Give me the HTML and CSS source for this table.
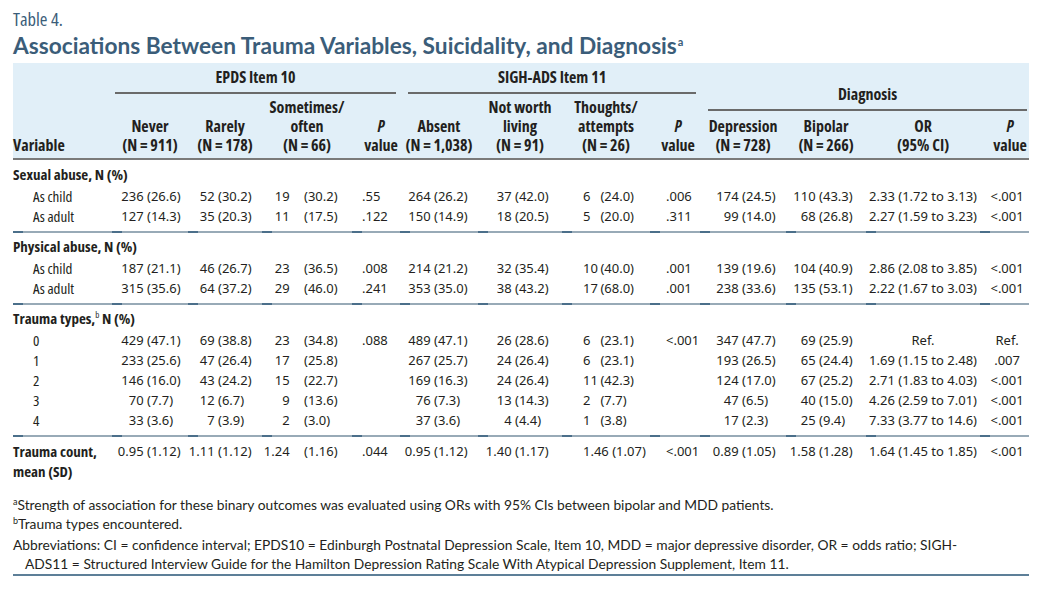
FILE: index.html
```html
<!DOCTYPE html>
<html lang="en">
<head>
<meta charset="utf-8">
<title>Table 4</title>
<link rel="stylesheet" href="styles.css">
</head>
<body>
<div class="page">
  <div class="tlabel">Table 4.</div>
  <h1 class="title">Associations Between Trauma Variables, Suicidality, and Diagnosis<sup>a</sup></h1>
  <table class="data">
    <colgroup>
      <col class="w-var"><col class="w-never"><col class="w-rarely"><col class="w-some"><col class="w-p1">
      <col class="w-absent"><col class="w-notw"><col class="w-thou"><col class="w-p2">
      <col class="w-dep"><col class="w-bip"><col class="w-or"><col class="w-p3">
    </colgroup>
    <thead>
      <tr class="hr1">
        <th rowspan="3" class="var">Variable</th>
        <th colspan="4" class="grp g1"><div class="rule">EPDS Item 10</div></th>
        <th colspan="4" class="grp g2"><div class="rule">SIGH-ADS Item 11</div></th>
        <th colspan="4" rowspan="2" class="grp g3"><div class="rule">Diagnosis</div></th>
      </tr>
      <tr class="hr2">
        <th rowspan="2">Never<br>(N&#8201;=&#8201;911)</th>
        <th rowspan="2">Rarely<br>(N&#8201;=&#8201;178)</th>
        <th rowspan="2">Sometimes/<br>often<br>(N&#8201;=&#8201;66)</th>
        <th rowspan="2" class="pv pv1"><i>P</i><br>value</th>
        <th rowspan="2">Absent<br>(N&#8201;=&#8201;1,038)</th>
        <th rowspan="2">Not worth<br>living<br>(N&#8201;=&#8201;91)</th>
        <th rowspan="2">Thoughts/<br>attempts<br>(N&#8201;=&#8201;26)</th>
        <th rowspan="2" class="pv pv2"><i>P</i><br>value</th>
      </tr>
      <tr class="hr3">
        <th>Depression<br>(N&#8201;=&#8201;728)</th>
        <th>Bipolar<br>(N&#8201;=&#8201;266)</th>
        <th>OR<br>(95% CI)</th>
        <th class="pv pv3"><i>P</i><br>value</th>
      </tr>
    </thead>
    <tbody>
      <tr class="grow first"><td colspan="13">Sexual abuse, N (%)</td></tr>
      <tr>
        <td>As child</td>
        <td>236 <span class="p">(26.6)</span></td><td>52 <span class="p">(30.2)</span></td><td>19 <span class="p">(30.2)</span></td><td>.55</td>
        <td>264 <span class="p">(26.2)</span></td><td>37 <span class="p">(42.0)</span></td><td><span class="n">6</span> <span class="p">(24.0)</span></td><td>.006</td>
        <td>174 <span class="p">(24.5)</span></td><td>110 <span class="p">(43.3)</span></td><td>2.33 (1.72 to 3.13)</td><td>&lt;.001</td>
      </tr>
      <tr class="end">
        <td>As adult</td>
        <td>127 <span class="p">(14.3)</span></td><td>35 <span class="p">(20.3)</span></td><td>11 <span class="p">(17.5)</span></td><td>.122</td>
        <td>150 <span class="p">(14.9)</span></td><td>18 <span class="p">(20.5)</span></td><td><span class="n">5</span> <span class="p">(20.0)</span></td><td>.311</td>
        <td>99 <span class="p">(14.0)</span></td><td>68 <span class="p">(26.8)</span></td><td>2.27 (1.59 to 3.23)</td><td>&lt;.001</td>
      </tr>
      <tr class="grow"><td colspan="13">Physical abuse, N (%)</td></tr>
      <tr>
        <td>As child</td>
        <td>187 <span class="p">(21.1)</span></td><td>46 <span class="p">(26.7)</span></td><td>23 <span class="p">(36.5)</span></td><td>.008</td>
        <td>214 <span class="p">(21.2)</span></td><td>32 <span class="p">(35.4)</span></td><td><span class="n">10</span> <span class="p">(40.0)</span></td><td>.001</td>
        <td>139 <span class="p">(19.6)</span></td><td>104 <span class="p">(40.9)</span></td><td>2.86 (2.08 to 3.85)</td><td>&lt;.001</td>
      </tr>
      <tr class="end">
        <td>As adult</td>
        <td>315 <span class="p">(35.6)</span></td><td>64 <span class="p">(37.2)</span></td><td>29 <span class="p">(46.0)</span></td><td>.241</td>
        <td>353 <span class="p">(35.0)</span></td><td>38 <span class="p">(43.2)</span></td><td><span class="n">17</span> <span class="p">(68.0)</span></td><td>.001</td>
        <td>238 <span class="p">(33.6)</span></td><td>135 <span class="p">(53.1)</span></td><td>2.22 (1.67 to 3.03)</td><td>&lt;.001</td>
      </tr>
      <tr class="grow"><td colspan="13">Trauma types,<sup>b</sup> N (%)</td></tr>
      <tr>
        <td>0</td>
        <td>429 <span class="p">(47.1)</span></td><td>69 <span class="p">(38.8)</span></td><td>23 <span class="p">(34.8)</span></td><td>.088</td>
        <td>489 <span class="p">(47.1)</span></td><td>26 <span class="p">(28.6)</span></td><td><span class="n">6</span> <span class="p">(23.1)</span></td><td>&lt;.001</td>
        <td>347 <span class="p">(47.7)</span></td><td>69 <span class="p">(25.9)</span></td><td>Ref.</td><td>Ref.</td>
      </tr>
      <tr>
        <td>1</td>
        <td>233 <span class="p">(25.6)</span></td><td>47 <span class="p">(26.4)</span></td><td>17 <span class="p">(25.8)</span></td><td></td>
        <td>267 <span class="p">(25.7)</span></td><td>24 <span class="p">(26.4)</span></td><td><span class="n">6</span> <span class="p">(23.1)</span></td><td></td>
        <td>193 <span class="p">(26.5)</span></td><td>65 <span class="p">(24.4)</span></td><td>1.69 (1.15 to 2.48)</td><td>.007</td>
      </tr>
      <tr>
        <td>2</td>
        <td>146 <span class="p">(16.0)</span></td><td>43 <span class="p">(24.2)</span></td><td>15 <span class="p">(22.7)</span></td><td></td>
        <td>169 <span class="p">(16.3)</span></td><td>24 <span class="p">(26.4)</span></td><td><span class="n">11</span> <span class="p">(42.3)</span></td><td></td>
        <td>124 <span class="p">(17.0)</span></td><td>67 <span class="p">(25.2)</span></td><td>2.71 (1.83 to 4.03)</td><td>&lt;.001</td>
      </tr>
      <tr>
        <td>3</td>
        <td>70 <span class="p">(7.7)</span></td><td>12 <span class="p">(6.7)</span></td><td>9 <span class="p">(13.6)</span></td><td></td>
        <td>76 <span class="p">(7.3)</span></td><td>13 <span class="p">(14.3)</span></td><td><span class="n">2</span> <span class="p">(7.7)</span></td><td></td>
        <td>47 <span class="p">(6.5)</span></td><td>40 <span class="p">(15.0)</span></td><td>4.26 (2.59 to 7.01)</td><td>&lt;.001</td>
      </tr>
      <tr class="end">
        <td>4</td>
        <td>33 <span class="p">(3.6)</span></td><td>7 <span class="p">(3.9)</span></td><td>2 <span class="p">(3.0)</span></td><td></td>
        <td>37 <span class="p">(3.6)</span></td><td>4 <span class="p">(4.4)</span></td><td><span class="n">1</span> <span class="p">(3.8)</span></td><td></td>
        <td>17 <span class="p">(2.3)</span></td><td>25 <span class="p">(9.4)</span></td><td>7.33 (3.77 to 14.6)</td><td>&lt;.001</td>
      </tr>
      <tr class="count">
        <td>Trauma count, mean (SD)</td>
        <td>0.95 <span class="p">(1.12)</span></td><td>1.11 <span class="p">(1.12)</span></td><td>1.24 <span class="p">(1.16)</span></td><td>.044</td>
        <td>0.95 <span class="p">(1.12)</span></td><td>1.40 <span class="p">(1.17)</span></td><td><span class="n">1.46</span> <span class="p">(1.07)</span></td><td>&lt;.001</td>
        <td>0.89 <span class="p">(1.05)</span></td><td>1.58 <span class="p">(1.28)</span></td><td>1.64 (1.45 to 1.85)</td><td>&lt;.001</td>
      </tr>
    </tbody>
  </table>
  <div class="notes">
    <p><sup>a</sup>Strength of association for these binary outcomes was evaluated using ORs with 95% CIs between bipolar and MDD patients.</p>
    <p><sup>b</sup>Trauma types encountered.</p>
    <p class="abbr">Abbreviations: CI = confidence interval; EPDS10 = Edinburgh Postnatal Depression Scale, Item 10, MDD = major depressive disorder, OR = odds ratio; SIGH-<span class="nowrap">ADS11 = Structured</span> Interview Guide for the Hamilton Depression Rating Scale With Atypical Depression Supplement, Item 11.</p>
  </div>
</div>
</body>
</html>
```
FILE: styles.css
```css
html, body {
  margin: 0;
  padding: 0;
  background: #ffffff;
}

.page {
  width: 1016px;
  padding: 8px 13px 0 13px;
  color: #231f20;
}

.tlabel {
  font-family: "Noto Sans Condensed", "Open Sans", sans-serif;
  font-stretch: 75%;
  font-weight: 500;
  font-size: 18.5px;
  line-height: 21px;
  color: #3b5d79;
}

.title {
  margin: 4px 0 4px 0;
  font-family: "Lato", "Liberation Sans", sans-serif;
  font-weight: 700;
  font-size: 22.7px;
  line-height: 26px;
  color: #3b5d79;
}

.title sup {
  font-size: 11px;
  line-height: 0;
  vertical-align: 8px;
  margin-left: 1px;
}

.data {
  width: 1016px;
  table-layout: fixed;
  border-collapse: collapse;
  font-family: "Noto Sans", sans-serif;
}

.w-var { width: 99px; }
.w-never { width: 76px; }
.w-rarely { width: 74px; }
.w-some { width: 90px; }
.w-p1 { width: 48px; }
.w-absent { width: 78px; }
.w-notw { width: 84px; }
.w-thou { width: 88px; }
.w-p2 { width: 50px; }
.w-dep { width: 86px; }
.w-bip { width: 80px; }
.w-or { width: 114px; }
.w-p3 { width: 49px; }

/* ---------- header ---------- */
.data thead {
  background: #e1eff8;
  border-bottom: 2px solid #7a7a7a;
}

.data th {
  padding: 0 0 3px 0;
  font-family: "Noto Sans Condensed", "Open Sans", sans-serif;
  font-size: 16px;
  font-stretch: 75%;
  line-height: 19px;
  font-weight: 700;
  text-align: center;
  vertical-align: bottom;
  white-space: nowrap;
  color: #231f20;
}

.hr1 { height: 31px; }
.hr2 { height: 19px; }
.hr3 { height: 46px; }

.data th.var {
  text-align: left;
  padding-left: 0;
}

.data th.grp {
  padding-bottom: 0;
}

.rule {
  padding-bottom: 5px;
  border-bottom: 2px solid #6a6a6a;
}

.g1 .rule { margin: 0 4px 0 3px; }
.g2 .rule { margin: 0 4px 0 8px; }
.g3 .rule { margin: 0 2px 2px 8px; }

.data th.pv1 { padding-left: 10px; }
.data th.pv2 { padding-left: 6px; }
.data th.pv3 { padding-left: 11px; }

/* ---------- body ---------- */
.data td {
  padding: 0;
  font-size: 13px;
  line-height: 20px;
  white-space: nowrap;
  text-align: right;
  vertical-align: top;
}

.data td:first-child {
  text-align: left;
  padding-left: 20px;
  white-space: normal;
  font-family: "Noto Sans Condensed", "Open Sans", sans-serif;
  font-size: 15px;
  font-stretch: 75%;
}

.data .grow td {
  padding: 3px 0 2px 0;
  font-weight: 700;
}

.data .grow.first td {
  padding-top: 4px;
}

.data .grow sup {
  font-size: 9px;
  line-height: 0;
  vertical-align: 6px;
  font-weight: 400;
}

.data .end td {
  padding-bottom: 7px;
  background:
    linear-gradient(#4b6f8a, #4b6f8a) left bottom / 10px 2px no-repeat,
    linear-gradient(#98aab7, #98aab7) left bottom / 100% 2px no-repeat;
}

.data .count td:first-child {
  padding-left: 0;
  font-weight: 700;
}

.data .count td {
  padding-top: 4px;
}

.p {
  display: inline-block;
  width: 36px;
  text-align: left;
}

/* column placement */
.data td:nth-child(2) { padding-right: 5px; }
.data td:nth-child(3) { padding-right: 8px; }
.data td:nth-child(4) { padding-right: 12px; }
.data td:nth-child(4) .p { margin-left: 11px; }
.data td:nth-child(5) { text-align: left; padding-left: 10px; }
.data td:nth-child(6) { padding-right: 8px; }
.data td:nth-child(7) { padding-right: 11px; }
.data td:nth-child(8) { text-align: left; padding-left: 21px; }
.data td:nth-child(8) .n { display: inline-block; width: 14px; }
.data td:nth-child(9) { text-align: left; padding-left: 16px; }
.data td:nth-child(10) { padding-right: 8px; }
.data td:nth-child(11) { padding-right: 11px; }
.data td:nth-child(12) { text-align: center; }
.data td:nth-child(13) { text-align: center; padding-left: 5px; }

.data .count td:nth-child(8) .n { width: auto; }

/* ---------- notes ---------- */
.notes {
  margin-top: 14px;
  padding-bottom: 1px;
  border-bottom: 2px solid #5d7f98;
  font-family: "Lato", "Liberation Sans", sans-serif;
  font-size: 13.8px;
  line-height: 19px;
  color: #231f20;
}

.notes p {
  margin: 0;
}

.notes sup {
  font-size: 9px;
  line-height: 0;
  vertical-align: 5px;
}

.notes .abbr {
  margin-top: 2px;
  padding-left: 12px;
  text-indent: -12px;
}

.nowrap {
  white-space: nowrap;
}
```
